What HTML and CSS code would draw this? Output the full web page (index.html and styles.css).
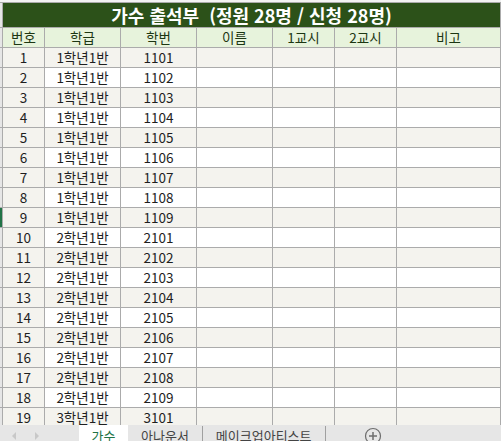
FILE: index.html
```html
<!DOCTYPE html>
<html lang="ko">
<head>
  <meta charset="UTF-8" />
  <title>가수 출석부</title>
  <link rel="stylesheet" href="styles.css">
</head>
<body>
  <div class="app">
    <div class="sheet-area">
      <div class="sheet">
        <div class="strip"></div>
        <div class="title">가수 출석부&nbsp; (정원 28명 / 신청 28명)</div>

        <div class="strip"></div>
        <div class="head">번호</div>
        <div class="head">학급</div>
        <div class="head">학번</div>
        <div class="head">이름</div>
        <div class="head">1교시</div>
        <div class="head">2교시</div>
        <div class="head">비고</div>

        <div class="strip"></div><div class="num">1</div><div class="cell odd">1학년1반</div><div class="cell odd">1101</div><div class="cell odd"></div><div class="cell odd"></div><div class="cell odd"></div><div class="cell odd"></div>
        <div class="strip"></div><div class="num">2</div><div class="cell">1학년1반</div><div class="cell">1102</div><div class="cell"></div><div class="cell"></div><div class="cell"></div><div class="cell"></div>
        <div class="strip"></div><div class="num">3</div><div class="cell odd">1학년1반</div><div class="cell odd">1103</div><div class="cell odd"></div><div class="cell odd"></div><div class="cell odd"></div><div class="cell odd"></div>
        <div class="strip"></div><div class="num">4</div><div class="cell">1학년1반</div><div class="cell">1104</div><div class="cell"></div><div class="cell"></div><div class="cell"></div><div class="cell"></div>
        <div class="strip"></div><div class="num">5</div><div class="cell odd">1학년1반</div><div class="cell odd">1105</div><div class="cell odd"></div><div class="cell odd"></div><div class="cell odd"></div><div class="cell odd"></div>
        <div class="strip"></div><div class="num">6</div><div class="cell">1학년1반</div><div class="cell">1106</div><div class="cell"></div><div class="cell"></div><div class="cell"></div><div class="cell"></div>
        <div class="strip"></div><div class="num">7</div><div class="cell odd">1학년1반</div><div class="cell odd">1107</div><div class="cell odd"></div><div class="cell odd"></div><div class="cell odd"></div><div class="cell odd"></div>
        <div class="strip"></div><div class="num">8</div><div class="cell">1학년1반</div><div class="cell">1108</div><div class="cell"></div><div class="cell"></div><div class="cell"></div><div class="cell"></div>
        <div class="strip active"></div><div class="num">9</div><div class="cell odd">1학년1반</div><div class="cell odd">1109</div><div class="cell odd"></div><div class="cell odd"></div><div class="cell odd"></div><div class="cell odd"></div>
        <div class="strip"></div><div class="num">10</div><div class="cell">2학년1반</div><div class="cell">2101</div><div class="cell"></div><div class="cell"></div><div class="cell"></div><div class="cell"></div>
        <div class="strip"></div><div class="num">11</div><div class="cell odd">2학년1반</div><div class="cell odd">2102</div><div class="cell odd"></div><div class="cell odd"></div><div class="cell odd"></div><div class="cell odd"></div>
        <div class="strip"></div><div class="num">12</div><div class="cell">2학년1반</div><div class="cell">2103</div><div class="cell"></div><div class="cell"></div><div class="cell"></div><div class="cell"></div>
        <div class="strip"></div><div class="num">13</div><div class="cell odd">2학년1반</div><div class="cell odd">2104</div><div class="cell odd"></div><div class="cell odd"></div><div class="cell odd"></div><div class="cell odd"></div>
        <div class="strip"></div><div class="num">14</div><div class="cell">2학년1반</div><div class="cell">2105</div><div class="cell"></div><div class="cell"></div><div class="cell"></div><div class="cell"></div>
        <div class="strip"></div><div class="num">15</div><div class="cell odd">2학년1반</div><div class="cell odd">2106</div><div class="cell odd"></div><div class="cell odd"></div><div class="cell odd"></div><div class="cell odd"></div>
        <div class="strip"></div><div class="num">16</div><div class="cell">2학년1반</div><div class="cell">2107</div><div class="cell"></div><div class="cell"></div><div class="cell"></div><div class="cell"></div>
        <div class="strip"></div><div class="num">17</div><div class="cell odd">2학년1반</div><div class="cell odd">2108</div><div class="cell odd"></div><div class="cell odd"></div><div class="cell odd"></div><div class="cell odd"></div>
        <div class="strip"></div><div class="num">18</div><div class="cell">2학년1반</div><div class="cell">2109</div><div class="cell"></div><div class="cell"></div><div class="cell"></div><div class="cell"></div>
        <div class="strip"></div><div class="num">19</div><div class="cell odd">3학년1반</div><div class="cell odd">3101</div><div class="cell odd"></div><div class="cell odd"></div><div class="cell odd"></div><div class="cell odd"></div>
      </div>
    </div>

    <div class="tabs">
      <div class="tab-nav">
        <svg width="8" height="10" viewBox="0 0 8 10"><path d="M6 1 L2 5 L6 9 Z" fill="#c8c8c8"/></svg>
        <svg width="8" height="10" viewBox="0 0 8 10"><path d="M2 1 L6 5 L2 9 Z" fill="#c8c8c8"/></svg>
      </div>
      <div class="tab current">가수</div>
      <div class="tab">아나운서</div>
      <div class="tab">메이크업아티스트</div>
      <div class="tab-add">
        <svg width="18" height="18" viewBox="0 0 18 18">
          <circle cx="9" cy="9" r="7.5" fill="none" stroke="#6e6e6e" stroke-width="1.2"/>
          <path d="M9 5 V13 M5 9 H13" stroke="#6e6e6e" stroke-width="1.5"/>
        </svg>
      </div>
    </div>
  </div>
</body>
</html>
```

FILE: styles.css
```css
* {
  box-sizing: border-box;
  margin: 0;
  padding: 0;
}

body {
  font-family: "Noto Sans CJK KR", "Noto Sans", sans-serif;
  background-color: #f3f3f3;
  color: #1e1e1e;
  overflow: hidden;
}

.app {
  width: 501px;
  height: 441px;
  display: flex;
  flex-direction: column;
  overflow: hidden;
}

.sheet-area {
  flex: 1;
  overflow: hidden;
  padding-top: 2px;
}

/* grid lines come from the grey background showing through the gaps */
.sheet {
  display: grid;
  grid-template-columns: 2px 41px 75px 75px 75px 61px 61px 103px;
  grid-template-rows: 24px;
  grid-auto-rows: 19px;
  gap: 1px;
  padding: 1px 1px 0 0;
  background-color: #ababab;
}

.strip {
  background-color: #e6e6e6;
}

.strip.active {
  background-color: #217346;
}

.title {
  grid-column: 2 / -1;
  background-color: #2c5119;
  color: #fff;
  font-size: 18px;
  font-weight: bold;
  text-align: center;
  line-height: 24px;
}

.head {
  background-color: #e7f3dc;
  color: #1c3612;
  font-size: 13.5px;
  text-align: center;
  line-height: 19px;
}

.num, .cell {
  font-size: 13.5px;
  text-align: center;
  line-height: 19px;
}

.num {
  background-color: #f4f3ee;
}

.cell {
  background-color: #fff;
}

.cell.odd {
  background-color: #f4f3ee;
}

.tabs {
  flex: none;
  height: 16px;
  display: flex;
  align-items: flex-start;
  background-color: #e6e6e6;
  font-size: 13px;
  color: #444;
  overflow: hidden;
}

.tab-nav {
  width: 79px;
  display: flex;
  gap: 15px;
  padding: 6px 0 0 10px;
}

.tab {
  height: 24px;
  line-height: 20px;
  padding: 0 13px;
  border-right: 1px solid #a0a0a0;
  margin-top: 1px;
}

.tab.current {
  width: 49px;
  margin-top: 0;
  padding: 1px 0 0;
  text-align: center;
  background-color: #fff;
  color: #217346;
  border-right: none;
}

.tab-add {
  padding: 2px 0 0 38px;
}
```
